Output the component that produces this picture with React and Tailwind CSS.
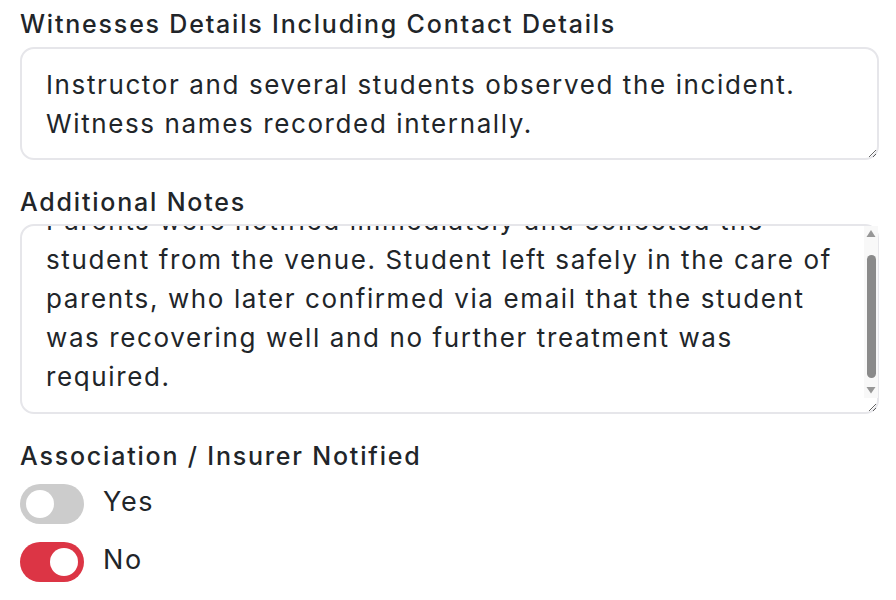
import React, { useEffect, useRef } from "react";

const notes =
  "Student was given first aid by the instructor on site and\nmonitored closely for the remainder of the session.\nParents were notified immediately and collected the\nstudent from the venue. Student left safely in the care of\nparents, who later confirmed via email that the student\nwas recovering well and no further treatment was\nrequired.";

function Toggle({ on }) {
  return (
    <div
      className={`relative w-[64px] h-[40px] rounded-full shrink-0 ${
        on ? "bg-[#dc3545]" : "bg-[#cccccc]"
      }`}
    >
      <div
        className={`absolute top-[6px] w-[28px] h-[28px] rounded-full bg-white ${
          on ? "left-[30px]" : "left-[6px]"
        }`}
      />
    </div>
  );
}

export default function App() {
  const ref = useRef(null);
  useEffect(() => {
    if (ref.current) ref.current.scrollTop = ref.current.scrollHeight;
  }, []);
  return (
    <div
      className="w-[896px] h-[600px] bg-white px-[20px] pt-[6px] text-[#212529] overflow-hidden"
      style={{ fontFamily: "Inter, 'Open Sans', sans-serif" }}
    >
      <div className="w-[859px] flex flex-col">
        <div className="text-[25px] leading-[36px] font-medium tracking-[0.072em]">
          Witnesses Details Including Contact Details
        </div>
        <textarea
          readOnly
          className="mt-[5px] h-[113px] w-full border-2 border-[#e6e6ea] rounded-[14px] pl-[24px] pr-[20px] py-[16px] text-[26px] leading-[39px] tracking-[0.062em] outline-none"
          defaultValue={"Instructor and several students observed the incident.\nWitness names recorded internally."}
        />
        <div className="mt-[24px] text-[25px] leading-[36px] font-medium tracking-[0.072em]">
          Additional Notes
        </div>
        <div className="relative mt-[4px]">
          <textarea
            ref={ref}
            readOnly
            className="block h-[190px] w-full overflow-hidden border-2 border-[#e6e6ea] rounded-[14px] pl-[24px] pr-[20px] py-[16px] text-[26px] leading-[39px] tracking-[0.062em] outline-none"
            defaultValue={notes}
          />
          <div className="absolute right-[1px] top-[2px] w-[14px] h-[172px] bg-[#f8f8f8] flex flex-col items-center">
            <svg width="14" height="14" viewBox="0 0 14 14" className="shrink-0 mt-[1px]">
              <path d="M2.5 10 L7 3 L11.5 10 Z" fill="#979797" />
            </svg>
            <div className="mt-[14px] w-[9px] h-[123px] rounded-full bg-[#8a8a8a]" />
            <div className="flex-1" />
            <svg width="14" height="14" viewBox="0 0 14 14" className="shrink-0">
              <path d="M2.5 3 L7 9.5 L11.5 3 Z" fill="#979797" />
            </svg>
          </div>
        </div>
        <div className="mt-[24px] text-[25px] leading-[36px] font-medium tracking-[0.072em]">
          Association / Insurer Notified
        </div>
        <div className="mt-[10px] h-[40px] flex items-center gap-[19px]">
          <Toggle on={false} />
          <span className="text-[27px] leading-[32px] mb-[4px] tracking-[0.06em]">Yes</span>
        </div>
        <div className="mt-[18px] h-[40px] flex items-center gap-[19px]">
          <Toggle on={true} />
          <span className="text-[27px] leading-[32px] mb-[4px] tracking-[0.06em]">No</span>
        </div>
      </div>
    </div>
  );
}
